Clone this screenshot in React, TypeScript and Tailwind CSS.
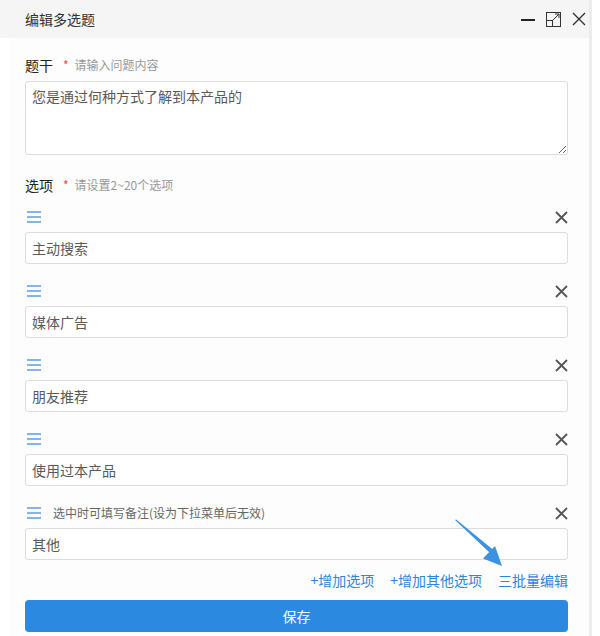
import { useState } from "react";

const FONT = { fontFamily: '"Noto Sans CJK SC", "Noto Sans", sans-serif' };

function DragIcon() {
  return (
    <svg width="16" height="14" viewBox="0 0 16 14" fill="none">
      <path d="M1 2h14M1 7h14M1 12h14" stroke="#5a9de3" strokeWidth="1.7" />
    </svg>
  );
}

function RemoveIcon() {
  return (
    <svg width="13" height="13" viewBox="0 0 13 13" fill="none">
      <path d="M1 1l11 11M12 1L1 12" stroke="#555" strokeWidth="1.8" />
    </svg>
  );
}

interface OptionRowProps {
  value: string;
  note?: string;
}

function OptionRow({ value, note }: OptionRowProps) {
  return (
    <div className="flex flex-col">
      <div className="flex h-[20px] items-center justify-between pl-[1px]">
        <div className="flex items-center gap-[11px]">
          <DragIcon />
          {note && <span className="text-[12px] text-[#666]">{note}</span>}
        </div>
        <RemoveIcon />
      </div>
      <input
        className="mt-[5px] h-[32px] rounded-[3px] border border-[#dcdcdc] bg-white px-[6px] text-[14px] text-[#5a5a5a] outline-none"
        defaultValue={value}
      />
    </div>
  );
}

export default function App() {
  const [options] = useState(["主动搜索", "媒体广告", "朋友推荐", "使用过本产品"]);

  return (
    <div className="relative h-[636px] w-[600px] bg-white" style={FONT}>
      <div className="flex h-full w-[592px] flex-col border-r-[3px] border-[#ececec]">
        {/* Header */}
        <div className="flex h-[38px] shrink-0 items-center justify-between bg-[#f5f5f5] pl-[25px] pr-[3px]">
          <span className="text-[14px] text-[#333]">编辑多选题</span>
          <div className="flex items-center gap-[11px]">
            <svg width="14" height="14" viewBox="0 0 14 14" fill="none">
              <path d="M0 8h14" stroke="#222" strokeWidth="2" />
            </svg>
            <svg width="15" height="15" viewBox="0 0 15 15" fill="none">
              <rect x="0.5" y="0.5" width="14" height="14" stroke="#333" />
              <rect x="0.5" y="8.5" width="6" height="6" stroke="#333" />
              <path d="M7 8l6-6M9 2h4v4" stroke="#333" />
            </svg>
            <svg width="14" height="14" viewBox="0 0 14 14" fill="none">
              <path d="M1 1l12 12M13 1L1 13" stroke="#333" strokeWidth="1.4" />
            </svg>
          </div>
        </div>

        {/* Body */}
        <div className="ml-[10px] flex flex-1 flex-col bg-[#fdfdfd] pl-[15px] pr-[21px] pt-[17px]">
          <div className="flex h-[20px] items-center">
            <span className="text-[14px] text-[#222]">题干</span>
            <span className="ml-[10px] text-[12px] text-[#f04343]">*</span>
            <span className="ml-[6px] text-[12px] text-[#999]">请输入问题内容</span>
          </div>
          <textarea
            className="mt-[6px] h-[74px] rounded-[3px] border border-[#dcdcdc] bg-white px-[6px] py-[4px] text-[14px] leading-[20px] text-[#5a5a5a] outline-none"
            defaultValue="您是通过何种方式了解到本产品的"
          />

          <div className="mt-[20px] flex h-[20px] items-center">
            <span className="text-[14px] text-[#222]">选项</span>
            <span className="ml-[10px] text-[12px] text-[#f04343]">*</span>
            <span className="ml-[6px] text-[12px] text-[#999]">请设置2~20个选项</span>
          </div>

          <div className="mt-[12px] flex flex-col gap-[17px]">
            {options.map((o) => (
              <OptionRow key={o} value={o} />
            ))}
            <OptionRow value="其他" note="选中时可填写备注(设为下拉菜单后无效)" />
          </div>

          <div className="mt-[10px] flex h-[20px] items-center justify-end gap-[16px] text-[14px] text-[#2e86dc]">
            <span>+增加选项</span>
            <span>+增加其他选项</span>
            <span>三批量编辑</span>
          </div>

          <button className="mt-[10px] h-[32px] rounded-[4px] bg-[#2b8ae0] text-[14px] text-white">
            保存
          </button>
        </div>
      </div>

      {/* Annotation arrow */}
      <svg
        className="pointer-events-none absolute left-0 top-0"
        width="600"
        height="636"
        viewBox="0 0 600 636"
      >
        <path d="M455 520L456.2 519.4L492.5 549.3L489.5 552.5Z" fill="#3b91e2" />
        <path d="M502 566L483 558.5L495 546Z" fill="#3b91e2" />
      </svg>
    </div>
  );
}
